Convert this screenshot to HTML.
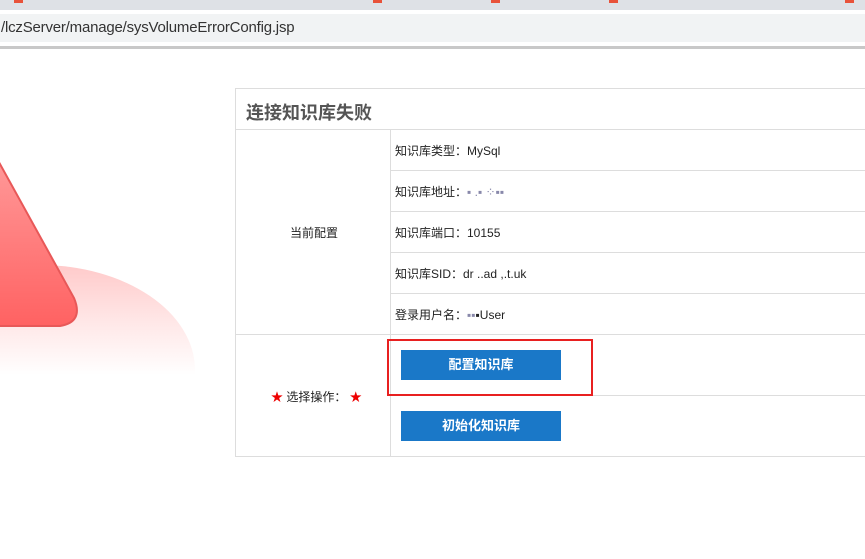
<!DOCTYPE html>
<html><head><meta charset="utf-8"><style>
*{margin:0;padding:0;box-sizing:border-box}
body{width:865px;height:559px;overflow:hidden;background:#fff;font-family:"Liberation Sans","Noto Sans CJK SC",sans-serif;position:relative}
.a{position:absolute}
.h{position:absolute;height:1px;background:#ddd}
.v{position:absolute;width:1px;background:#ddd}
.t{position:absolute;font-size:12px;color:#222;line-height:14px}
.btn{position:absolute;width:160px;height:30px;background:#1a78c8;color:#fff;font-size:13px;font-weight:bold;text-align:center;line-height:30px}
</style></head><body>
<div class="a" style="left:0;top:0;width:865px;height:10px;background:#dee1e6"></div>
<div class="a" style="left:14px;top:0;width:9px;height:3px;background:#e8523a"></div>
<div class="a" style="left:373px;top:0;width:9px;height:3px;background:#e8523a"></div>
<div class="a" style="left:491px;top:0;width:9px;height:3px;background:#e8523a"></div>
<div class="a" style="left:609px;top:0;width:9px;height:3px;background:#e8523a"></div>
<div class="a" style="left:845px;top:0;width:9px;height:3px;background:#e8523a"></div>
<div class="a" style="left:0;top:10px;width:865px;height:36px;background:#fff"></div>
<div class="a" style="left:0;top:14px;width:865px;height:28px;background:#f1f3f4"></div>
<div class="a" style="left:1px;top:19px;font-size:15px;color:#333;letter-spacing:-0.2px">/lczServer/manage/sysVolumeErrorConfig.jsp</div>
<div class="a" style="left:0;top:46px;width:865px;height:3px;background:#c8c8c8"></div>
<svg class="a" style="left:0;top:150px" width="200" height="240">
<defs>
<linearGradient id="e" gradientUnits="userSpaceOnUse" x1="0" y1="115" x2="0" y2="225"><stop offset="0" stop-color="#ffcaca"/><stop offset="0.5" stop-color="#ffe6e6"/><stop offset="1" stop-color="#fff"/></linearGradient>
<linearGradient id="tr" x1="0" y1="0" x2="0" y2="1"><stop offset="0" stop-color="#ff9a9a"/><stop offset="1" stop-color="#ff6262"/></linearGradient>
</defs>
<ellipse cx="40" cy="220" rx="155" ry="105" fill="url(#e)"/>
<path d="M-5 5 L74 148 Q84 172 60 176 L-5 176 Z" fill="url(#tr)" stroke="#e85858" stroke-width="2"/>
</svg>
<div class="h" style="left:236px;top:88px;width:629px"></div>
<div class="h" style="left:236px;top:129px;width:629px"></div>
<div class="h" style="left:391px;top:170px;width:474px"></div>
<div class="h" style="left:391px;top:211px;width:474px"></div>
<div class="h" style="left:391px;top:252px;width:474px"></div>
<div class="h" style="left:391px;top:293px;width:474px"></div>
<div class="h" style="left:236px;top:334px;width:629px"></div>
<div class="h" style="left:391px;top:395px;width:474px"></div>
<div class="h" style="left:236px;top:456px;width:629px"></div>
<div class="v" style="left:235px;top:88px;height:369px"></div>
<div class="v" style="left:390px;top:129px;height:328px"></div>
<div class="a" style="left:246px;top:99px;font-size:18px;font-weight:bold;color:#555">连接知识库失败</div>
<div class="t" style="left:395px;top:144px">知识库类型：MySql</div>
<div class="t" style="left:395px;top:185px">知识库地址：<span style="color:#88a">▪︎ .▪ ⁘▪▪</span></div>
<div class="t" style="left:395px;top:226px">知识库端口：10155</div>
<div class="t" style="left:395px;top:267px">知识库SID：dr ..ad ,.t.uk</div>
<div class="t" style="left:395px;top:308px">登录用户名：<span style="color:#88a">▪▪</span>▪User</div>
<div class="t" style="left:290px;top:226px">当前配置</div>
<div class="t" style="left:271px;top:390px"><span style="color:#e00">★</span> 选择操作： <span style="color:#e00">★</span></div>
<div class="a" style="left:387px;top:339px;width:206px;height:57px;border:2px solid #e82020"></div>
<div class="btn" style="left:401px;top:350px">配置知识库</div>
<div class="btn" style="left:401px;top:411px">初始化知识库</div>
</body></html>
